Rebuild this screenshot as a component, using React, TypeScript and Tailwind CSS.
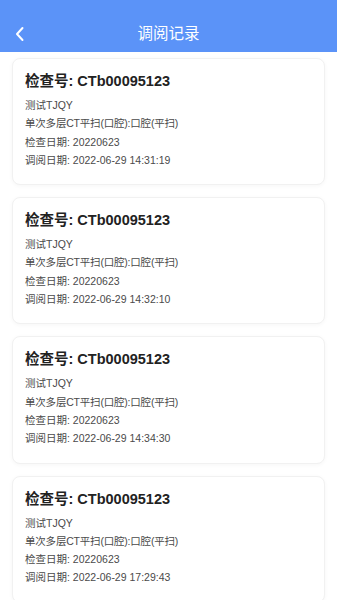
import React from 'react';

interface RecordItem {
  checkNo: string;
  name: string;
  item: string;
  checkDate: string;
  viewTime: string;
}

const records: RecordItem[] = [
  { checkNo: 'CTb00095123', name: '测试TJQY', item: '单次多层CT平扫(口腔):口腔(平扫)', checkDate: '20220623', viewTime: '2022-06-29 14:31:19' },
  { checkNo: 'CTb00095123', name: '测试TJQY', item: '单次多层CT平扫(口腔):口腔(平扫)', checkDate: '20220623', viewTime: '2022-06-29 14:32:10' },
  { checkNo: 'CTb00095123', name: '测试TJQY', item: '单次多层CT平扫(口腔):口腔(平扫)', checkDate: '20220623', viewTime: '2022-06-29 14:34:30' },
  { checkNo: 'CTb00095123', name: '测试TJQY', item: '单次多层CT平扫(口腔):口腔(平扫)', checkDate: '20220623', viewTime: '2022-06-29 17:29:43' },
];

const RecordCard: React.FC<{ record: RecordItem }> = ({ record }) => (
  <div className="rounded-[8px] border border-[#f1f1f1] bg-white px-[12px] pt-[11px] pb-[15px] shadow-[0_1px_4px_rgba(0,0,0,0.04)]">
    <div className="text-[14.5px] font-bold leading-[22px] text-[#222]">检查号: {record.checkNo}</div>
    <div className="mt-[4px] text-[10.5px] leading-[18.3px] text-[#4a4a4a]">
      <div>{record.name}</div>
      <div className="tracking-[-0.2px]">{record.item}</div>
      <div>检查日期: {record.checkDate}</div>
      <div>调阅日期: {record.viewTime}</div>
    </div>
  </div>
);

export default function App() {
  return (
    <div
      className="min-h-[600px] w-[337px] bg-white"
      style={{ fontFamily: '"Liberation Sans", "Noto Sans CJK SC", sans-serif' }}
    >
      <div className="flex h-[52px] items-end bg-[#5b93f8]">
        <div className="relative flex h-[36px] w-full items-center justify-center">
          <button className="absolute left-[12px] top-1/2 -translate-y-1/2 p-[2px]">
            <svg width="12" height="16" viewBox="0 0 12 16" fill="none">
              <path d="M8.5 2 L3 8 L8.5 14" stroke="white" strokeWidth="2" strokeLinecap="round" strokeLinejoin="round" />
            </svg>
          </button>
          <span className="text-[15.5px] text-white">调阅记录</span>
        </div>
      </div>
      <div className="flex flex-col gap-[12px] px-[12px] pt-[6px]">
        {records.map((r, i) => (
          <RecordCard key={i} record={r} />
        ))}
      </div>
    </div>
  );
}
